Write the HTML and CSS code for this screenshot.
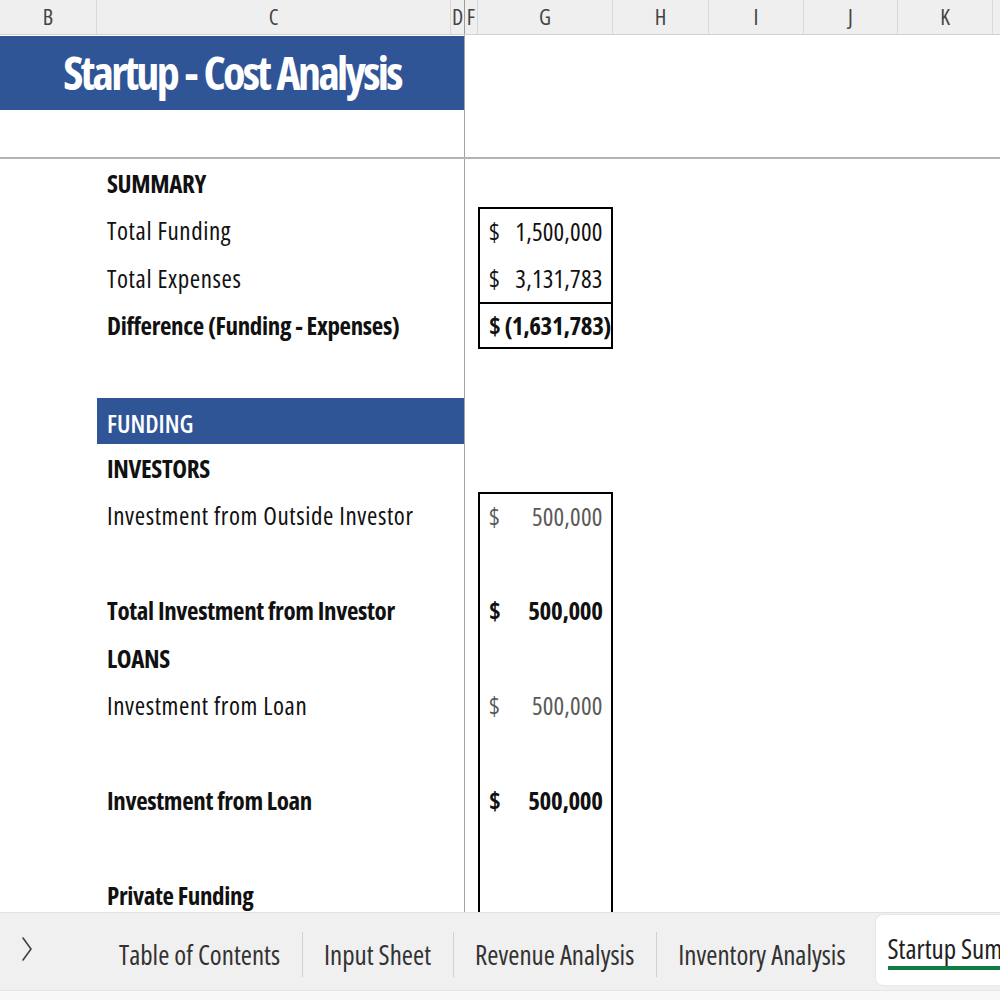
FILE: index.html
```html
<!DOCTYPE html>
<html>
<head>
<meta charset="utf-8">
<link rel="stylesheet" href="styles.css">
</head>
<body>
<div class="app">
  <div class="colhdr">
    <div class="ch w-b">B</div>
    <div class="ch w-c">C</div>
    <div class="ch w-d">D</div>
    <div class="ch w-f">F</div>
    <div class="ch w-g">G</div>
    <div class="ch w-h">H</div>
    <div class="ch w-i">I</div>
    <div class="ch w-j">J</div>
    <div class="ch w-k">K</div>
    <div class="ch w-rest"></div>
  </div>

  <div class="sheet">
    <div class="top">
      <div class="top-left"><div class="title">Startup - Cost Analysis</div></div>
      <div class="top-right"></div>
    </div>

    <div class="rows">
      <div class="row"><div class="cb"></div><div class="cc label bold">SUMMARY</div><div class="vl"></div><div class="cf"></div><div class="cg"></div></div>
      <div class="row"><div class="cb"></div><div class="cc label">Total Funding</div><div class="vl"></div><div class="cf"></div><div class="cg box btop"><span class="cur">$</span><span class="num">1,500,000<span class="pad">)</span></span></div></div>
      <div class="row"><div class="cb"></div><div class="cc label">Total Expenses</div><div class="vl"></div><div class="cf"></div><div class="cg box"><span class="cur">$</span><span class="num">3,131,783<span class="pad">)</span></span></div></div>
      <div class="row"><div class="cb"></div><div class="cc label bold">Difference (Funding - Expenses)</div><div class="vl"></div><div class="cf"></div><div class="cg box btop bbot bold"><span class="cur">$</span><span class="num">(1,631,783)</span></div></div>
      <div class="row"><div class="cb"></div><div class="cc"></div><div class="vl"></div><div class="cf"></div><div class="cg"></div></div>
      <div class="row"><div class="cb"></div><div class="cc band">FUNDING</div><div class="vl"></div><div class="cf"></div><div class="cg"></div></div>
      <div class="row"><div class="cb"></div><div class="cc label bold">INVESTORS</div><div class="vl"></div><div class="cf"></div><div class="cg"></div></div>
      <div class="row"><div class="cb"></div><div class="cc label">Investment from Outside Investor</div><div class="vl"></div><div class="cf"></div><div class="cg box btop muted"><span class="cur">$</span><span class="num">500,000<span class="pad">)</span></span></div></div>
      <div class="row"><div class="cb"></div><div class="cc"></div><div class="vl"></div><div class="cf"></div><div class="cg box"></div></div>
      <div class="row"><div class="cb"></div><div class="cc label bold">Total Investment from Investor</div><div class="vl"></div><div class="cf"></div><div class="cg box bold"><span class="cur">$</span><span class="num">500,000<span class="pad">)</span></span></div></div>
      <div class="row"><div class="cb"></div><div class="cc label bold">LOANS</div><div class="vl"></div><div class="cf"></div><div class="cg box"></div></div>
      <div class="row"><div class="cb"></div><div class="cc label">Investment from Loan</div><div class="vl"></div><div class="cf"></div><div class="cg box muted"><span class="cur">$</span><span class="num">500,000<span class="pad">)</span></span></div></div>
      <div class="row"><div class="cb"></div><div class="cc"></div><div class="vl"></div><div class="cf"></div><div class="cg box"></div></div>
      <div class="row"><div class="cb"></div><div class="cc label bold">Investment from Loan</div><div class="vl"></div><div class="cf"></div><div class="cg box bold"><span class="cur">$</span><span class="num">500,000<span class="pad">)</span></span></div></div>
      <div class="row"><div class="cb"></div><div class="cc"></div><div class="vl"></div><div class="cf"></div><div class="cg box"></div></div>
      <div class="row"><div class="cb"></div><div class="cc label bold">Private Funding</div><div class="vl"></div><div class="cf"></div><div class="cg box"></div></div>
    </div>
  </div>

  <div class="tabbar">
    <div class="tabs">
      <div class="nav">
        <svg width="14" height="28" viewBox="0 0 14 28"><polyline points="3,3 11,14 3,25" fill="none" stroke="#404040" stroke-width="1.6" stroke-linecap="round" stroke-linejoin="round"/></svg>
      </div>
      <div class="tab first">Table of Contents</div>
      <div class="tab">Input Sheet</div>
      <div class="tab">Revenue Analysis</div>
      <div class="tab">Inventory Analysis</div>
      <div class="tab active"><span class="tab-text">Startup Summary</span></div>
    </div>
    <div class="status"></div>
  </div>
</div>
</body>
</html>
```
FILE: styles.css
```css
* { box-sizing: border-box; }
html, body { margin: 0; padding: 0; }
body {
  width: 1000px;
  height: 1000px;
  overflow: hidden;
  background: #ffffff;
  font-family: "Open Sans", "Noto Sans", sans-serif;
  font-stretch: 87.5%;
  color: #111111;
}
.app { display: flex; flex-direction: column; height: 1000px; }

/* column header */
.colhdr {
  display: flex;
  height: 35px;
  flex: none;
  background: #efefef;
  border-bottom: 1px solid #d2d2d2;
}
.ch {
  height: 100%;
  border-right: 1px solid #d8d8d8;
  display: flex;
  align-items: center;
  justify-content: center;
  font-size: 22px;
  font-stretch: 75%;
  color: #444444;
  overflow: hidden;
  flex: none;
  padding-bottom: 2px;
}
.w-b { width: 97px; }
.w-c { width: 354px; }
.w-d { width: 14px; border-right: 1px solid #9c9c9c; }
.w-f { width: 13px; }
.w-g { width: 135px; }
.w-h { width: 96px; }
.w-i { width: 95px; }
.w-j { width: 94px; }
.w-k { width: 95px; }
.w-rest { flex: 1; border-right: none; }

/* sheet */
.sheet { flex: 1; overflow: hidden; }
.top {
  display: flex;
  height: 124px;
  border-bottom: 2px solid #b4b4b4;
}
.top-left {
  width: 465px;
  border-right: 1px solid #a2a2a2;
  padding-top: 1px;
}
.title {
  height: 74px;
  background: #2f5597;
  color: #ffffff;
  font-weight: 700;
  font-size: 46px;
  font-stretch: 75%;
  display: flex;
  align-items: center;
  justify-content: center;
  padding-bottom: 3px;
  letter-spacing: -2.7px;
  word-spacing: 2px;
}
.top-right { flex: 1; }

.rows { display: flex; flex-direction: column; }
.row { display: flex; height: 47.5px; flex: none; }
.cb { width: 97px; flex: none; }
.cc { width: 367px; flex: none; display: flex; align-items: center; }
.vl { width: 1px; flex: none; background: #a2a2a2; }
.cf { width: 13px; flex: none; }
.cg {
  width: 135px;
  flex: none;
  display: flex;
  align-items: center;
  justify-content: space-between;
  padding: 0 1px 0 9px;
  font-size: 25px;
  letter-spacing: 0.2px;
  color: #111111;
}
.label { padding-left: 10px; font-size: 25px; color: #111111; letter-spacing: 0.6px; }
.bold { font-weight: 700; letter-spacing: -0.35px; }
.label.bold { letter-spacing: -0.35px; }
.band {
  background: #2f5597;
  color: #ffffff;
  font-size: 25px;
  font-weight: 600;
  padding-left: 10px;
  padding-top: 3px;
  margin-top: 1.5px;
}
.box { border-left: 2px solid #000000; border-right: 2px solid #000000; }
.btop { border-top: 2px solid #000000; }
.bbot { border-bottom: 2px solid #000000; }
.muted { color: #595959; }
.cg.bold .cur { padding-right: 4px; }
.pad { visibility: hidden; }

/* tabs */
.tabbar {
  flex: none;
  height: 88px;
  display: flex;
  flex-direction: column;
  background: #f0f0f0;
  border-top: 1px solid #e2e2e2;
}
.tabs {
  flex: 1;
  display: flex;
  align-items: stretch;
  padding-top: 2px;
  padding-bottom: 5px;
}
.nav {
  width: 97px;
  display: flex;
  align-items: center;
  padding-left: 20px;
  padding-bottom: 2px;
}
.tab {
  display: flex;
  align-items: center;
  padding: 8px 22px 0 22px;
  font-size: 27px;
  font-stretch: 75%;
  color: #333333;
  position: relative;
  white-space: nowrap;
}
.tab + .tab::before {
  content: "";
  position: absolute;
  left: 0;
  top: 17px;
  bottom: 8px;
  width: 1px;
  background: #d0d0d0;
}
.tab.first { padding-left: 22px; }
.tab.active {
  flex: 1;
  margin-left: 8px;
  background: #ffffff;
  border-radius: 7px 0 0 7px;
  padding-left: 12px;
  padding-right: 0;
  padding-top: 0;
  overflow: hidden;
  box-shadow: 0 0 2px rgba(0,0,0,0.12);
}
.tab.active::before { display: none; }
.tab-text {
  border-bottom: 4px solid #107c41;
  padding-top: 2px;
  line-height: 1.25;
  color: #222222;
}
.status { height: 10px; background: #f8f8f8; border-top: 1px solid #e6e6e6; }
```
